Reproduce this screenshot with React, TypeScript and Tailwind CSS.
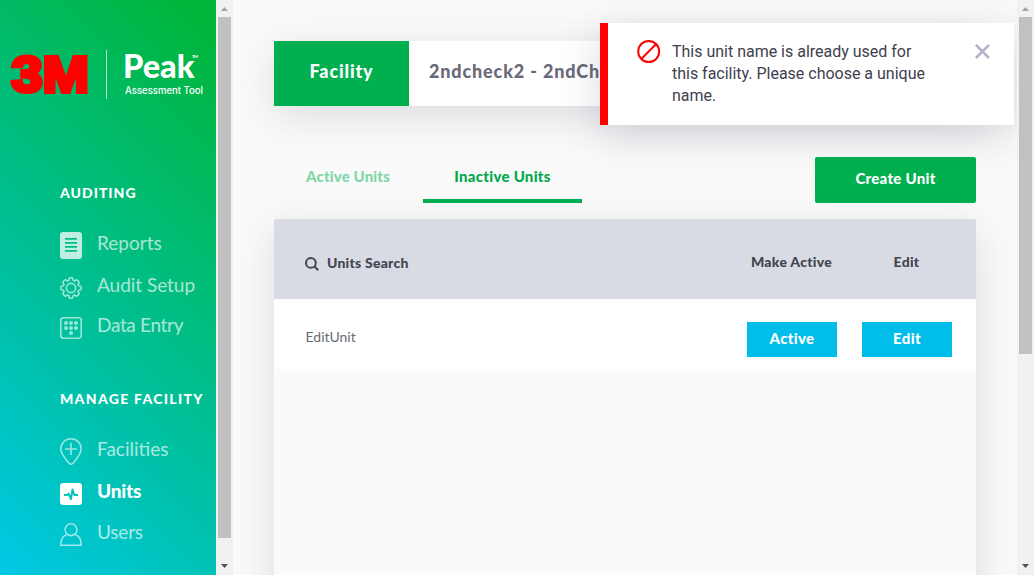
import React from "react";

type ScrollbarProps = { thumb: string };

function Scrollbar({ thumb }: ScrollbarProps) {
  return (
    <div className="flex h-full w-[17px] shrink-0 flex-col items-center bg-[#f1f1f1]">
      <svg className="h-[17px] w-[17px] shrink-0" viewBox="0 0 17 17">
        <path d="M5 11h7L8.5 7z" fill="#a3a3a3" />
      </svg>
      <div className={`w-[13px] bg-[#c1c1c1] ${thumb}`} />
      <svg className="mt-auto h-[17px] w-[17px] shrink-0" viewBox="0 0 17 17">
        <path d="M5 6h7L8.5 10z" fill="#505050" />
      </svg>
    </div>
  );
}

function Logo() {
  return (
    <svg className="block h-[120px] w-[216px] shrink-0" viewBox="0 0 216 120">
      <g fontFamily="Liberation Sans, Arial, sans-serif" fontWeight="700" fontSize="50" fill="#ff0000" stroke="#ff0000">
        <text x="11.5" y="92" strokeWidth="4.2" textLength="31" lengthAdjust="spacingAndGlyphs">3</text>
        <text x="42.5" y="92" strokeWidth="4" textLength="46.500" lengthAdjust="spacingAndGlyphs">M</text>
      </g>
      <path d="M106.5 50v49" stroke="#fff" strokeOpacity=".7" />
      <text x="123" y="78" fontFamily="Lato, sans-serif" fontWeight="900" fontSize="31.5" fill="#fff" textLength="71.500" lengthAdjust="spacingAndGlyphs">Peak</text>
      <text x="192" y="58" fontFamily="Lato, sans-serif" fontWeight="700" fontSize="4.5" fill="#fff" textLength="6">TM</text>
      <text x="125" y="94" fontFamily="Inter, sans-serif" fontWeight="500" fontSize="9.800" fill="#fff" textLength="78" lengthAdjust="spacingAndGlyphs">Assessment Tool</text>
    </svg>
  );
}

function ReportsIcon() {
  return (
    <svg className="h-[27px] w-[22px]" viewBox="0 0 22 27">
      <path fillRule="evenodd" fill="currentColor" d="M3 0h16a3 3 0 0 1 3 3v21a3 3 0 0 1-3 3H3a3 3 0 0 1-3-3V3a3 3 0 0 1 3-3zM5 6v1.7h12V6zM5 10v1.7h12V10zM5 14v1.7h12V14zM5 18v1.7h12V18z" />
    </svg>
  );
}

function GearIcon() {
  return (
    <svg className="h-[22px] w-[22px]" viewBox="0 0 22 22" fill="none" stroke="currentColor" strokeWidth="1.6" strokeLinejoin="round">
      <circle cx="11" cy="11" r="4.6" />
      <path d="M9.2 1.300Q11 .2 12.800 1.300L13.200 3.400 14.600 4 16.500 2.800Q18.500 3.500 19.200 5.500L18 7.400 18.600 8.800 20.700 9.200Q21.800 11 20.700 12.800L18.600 13.200 18 14.600 19.200 16.500Q18.500 18.500 16.500 19.200L14.600 18 13.200 18.600 12.800 20.700Q11 21.800 9.200 20.700L8.800 18.600 7.400 18 5.500 19.200Q3.500 18.500 2.800 16.500L4 14.600 3.400 13.200 1.300 12.800Q.2 11 1.300 9.200L3.400 8.800 4 7.400 2.800 5.500Q3.500 3.500 5.500 2.800L7.400 4 8.800 3.400z" />
    </svg>
  );
}

function DataIcon() {
  const dots = [[6, 6], [11, 6], [16, 6], [6, 11], [11, 11], [16, 11], [11, 16]];
  return (
    <svg className="h-[22px] w-[22px]" viewBox="0 0 22 22">
      <rect x=".8" y=".8" width="20.4" height="20.4" rx="2.6" fill="none" stroke="currentColor" strokeWidth="1.6" />
      {dots.map(([x, y]) => (
        <circle key={`${x}-${y}`} cx={x} cy={y} r="2" fill="currentColor" />
      ))}
    </svg>
  );
}

function PinIcon() {
  return (
    <svg className="h-[27px] w-[22px]" viewBox="0 0 22 27" fill="none" stroke="currentColor" strokeWidth="1.6">
      <path d="M11 26.200C9.300 26.200 7.800 24 5.300 20.600 2.700 17.100.8 14.300.8 11A10.200 10.200 0 0 1 21.200 11c0 3.300-1.900 6.100-4.500 9.600C14.200 24 12.700 26.200 11 26.200z" />
      <path d="M11 5v12M5 11h12" />
    </svg>
  );
}

function UnitsIcon() {
  return (
    <svg className="h-[22px] w-[22px]" viewBox="0 0 22 22">
      <rect width="22" height="22" rx="3" fill="#fff" />
      <path d="M4 12h3.300l1.200-1.500L11 16l1.500-9.500L14.300 12H18" fill="none" stroke="#00c3ba" strokeWidth="1.900" strokeLinejoin="round" />
    </svg>
  );
}

function UserIcon() {
  return (
    <svg className="h-[23px] w-[22px]" viewBox="0 0 22 23" fill="none" stroke="currentColor" strokeWidth="1.6">
      <circle cx="11" cy="6.700" r="5.900" />
      <path d="M6.500 11.700C2.500 13 .8 16.500.8 22.200h20.400c0-5.700-1.700-9.200-5.700-10.500" />
    </svg>
  );
}

type NavItemProps = { icon: React.ReactNode; label: string; box: string; text: string; active?: boolean };

function NavItem({ icon, label, box, text, active }: NavItemProps) {
  return (
    <a className={`flex pl-[60px] ${box} ${active ? "font-black text-white" : "font-normal text-white/65"}`}>
      <span className="w-[37px] shrink-0 pt-[3px]">
        <span className={label === "Reports" ? "block text-white/75" : "block text-white/60"}>{icon}</span>
      </span>
      <span className={`whitespace-nowrap text-[19px] leading-6 ${text}`}>{label}</span>
    </a>
  );
}

function Sidebar() {
  return (
    <aside className="flex h-full w-[233px] shrink-0">
      <nav className="flex h-full w-[216px] flex-col overflow-hidden bg-[linear-gradient(45deg,#00c8e6_0%,#00be8c_50%,#00b533_100%)]">
        <Logo />
        <h2 className="mt-[63px] pl-[60px] text-[14px] leading-5 font-black tracking-[1px] text-white">AUDITING</h2>
        <div className="mt-[26px] flex flex-col">
          <NavItem icon={<ReportsIcon />} label="Reports" box="h-[45px]" text="mt-[2px]" />
          <NavItem icon={<GearIcon />} label="Audit Setup" box="h-[40px]" text="-mt-px tracking-[-0.03px]" />
          <NavItem icon={<DataIcon />} label="Data Entry" box="h-[36px]" text="-mt-px tracking-[-0.32px]" />
        </div>
        <h2 className="mt-[39px] pl-[60px] text-[14px] leading-5 font-black tracking-[1.3px] whitespace-nowrap text-white">MANAGE FACILITY</h2>
        <div className="mt-[26px] flex flex-col">
          <NavItem icon={<PinIcon />} label="Facilities" box="h-[45px]" text="mt-[2px]" />
          <NavItem icon={<UnitsIcon />} label="Units" box="h-[40px]" text="-mt-px tracking-[-0.2px]" active />
          <NavItem icon={<UserIcon />} label="Users" box="h-[36px]" text="tracking-[-0.2px]" />
        </div>
      </nav>
      <Scrollbar thumb="h-[521px]" />
    </aside>
  );
}

function Toast() {
  return (
    <div role="alert" className="absolute top-[23px] right-[20px] flex h-[102px] w-[414px] border-l-8 border-[#ff0000] bg-white shadow-[0_10px_40px_rgba(70,70,100,0.2)]">
      <svg className="mt-[17px] ml-[29px] h-6 w-6 shrink-0" viewBox="0 0 24 24" fill="none" stroke="#ff0000" strokeWidth="2">
        <circle cx="11.700" cy="11.500" r="10.500" />
        <path d="M4.500 18.800 18.900 4.200" />
      </svg>
      <p className="mt-[18px] ml-[11px] w-[264px] font-[Roboto,sans-serif] text-[16px] leading-[22px] tracking-[-0.01px] text-[#3f404f]">
        This unit name is already used for this facility. Please choose a unique name.
      </p>
      <svg className="mt-[21px] ml-[39px] h-[15px] w-[15px] shrink-0" viewBox="0 0 15 15" stroke="#b2b4c5" strokeWidth="2.500">
        <path d="M.9.9 14 14M14 .9.9 14" />
      </svg>
    </div>
  );
}

export default function App() {
  return (
    <div className="relative flex h-[575px] w-[1034px] overflow-hidden bg-[#fafafa] font-[Lato,sans-serif]">
      <Sidebar />
      <main className="flex h-full w-[784px] flex-col pt-[41px] pr-[41px] pl-[41px]">
        <header className="flex h-[65px] w-[702px] shrink-0 bg-white shadow-[0_10px_40px_rgba(70,70,100,0.16)]">
          <div className="flex w-[135px] items-center justify-center bg-[#00b04f] pb-[4px] text-[18px] font-black tracking-[0.85px] text-white">Facility</div>
          <div className="flex items-center pb-[4px] pl-5 text-[18px] font-black tracking-[0.85px] whitespace-nowrap text-[#696a78]">2ndcheck2 - 2ndCheck2</div>
        </header>
        <div className="mt-[51px] flex h-[46px] w-[702px] shrink-0 justify-between">
          <div className="flex text-[15px] leading-[39px] font-black">
            <button className="flex w-[149px] justify-center pr-px tracking-[0.15px] text-[#80d7a7]">Active Units</button>
            <button className="flex w-[159px] justify-center border-b-4 border-[#00b04f] tracking-[0.28px] text-[#00a94c]">Inactive Units</button>
          </div>
          <button className="w-[161px] rounded-[2px] bg-[#00b04f] pb-[3px] text-[15px] font-black tracking-[0.28px] text-white">Create Unit</button>
        </div>
        <section className="mt-4 h-[440px] w-[702px] shrink-0 rounded-[2px] bg-[#fafafa] shadow-[0_10px_40px_rgba(70,70,100,0.16)]">
          <div className="flex h-20 items-center rounded-t-[2px] bg-[#d8dbe3] pt-[4px] text-[14px] font-black text-[#43444f]">
            <svg className="mt-[6px] ml-[31px] h-[14px] w-[14px]" viewBox="0 0 14 14" fill="none" stroke="#43444f" strokeWidth="2">
              <circle cx="5.900" cy="5.900" r="4.900" />
              <path d="m9.300 9.300 3.900 3.900" />
            </svg>
            <span className="mt-[3px] ml-[8px] w-[407px] tracking-[0.24px]">Units Search</span>
            <span className="w-[115px] text-center tracking-[0.28px]">Make Active</span>
            <span className="w-[115px] text-center tracking-[0.28px]">Edit</span>
          </div>
          <div className="flex h-[70px] bg-white pt-[23px]">
            <span className="w-[473px] pl-[31.500px] text-[14px] leading-[29px] text-[#6a6b73]">EditUnit</span>
            <button className="h-[35px] w-[90px] bg-[#00bde9] pb-[3px] text-[15px] font-black tracking-[0.35px] text-white">Active</button>
            <button className="ml-[25px] h-[35px] w-[90px] bg-[#00bde9] pb-[3px] text-[15px] font-black tracking-[0.35px] text-white">Edit</button>
          </div>
        </section>
      </main>
      <div className="relative z-10">
        <Scrollbar thumb="h-[337px]" />
      </div>
      <Toast />
    </div>
  );
}
